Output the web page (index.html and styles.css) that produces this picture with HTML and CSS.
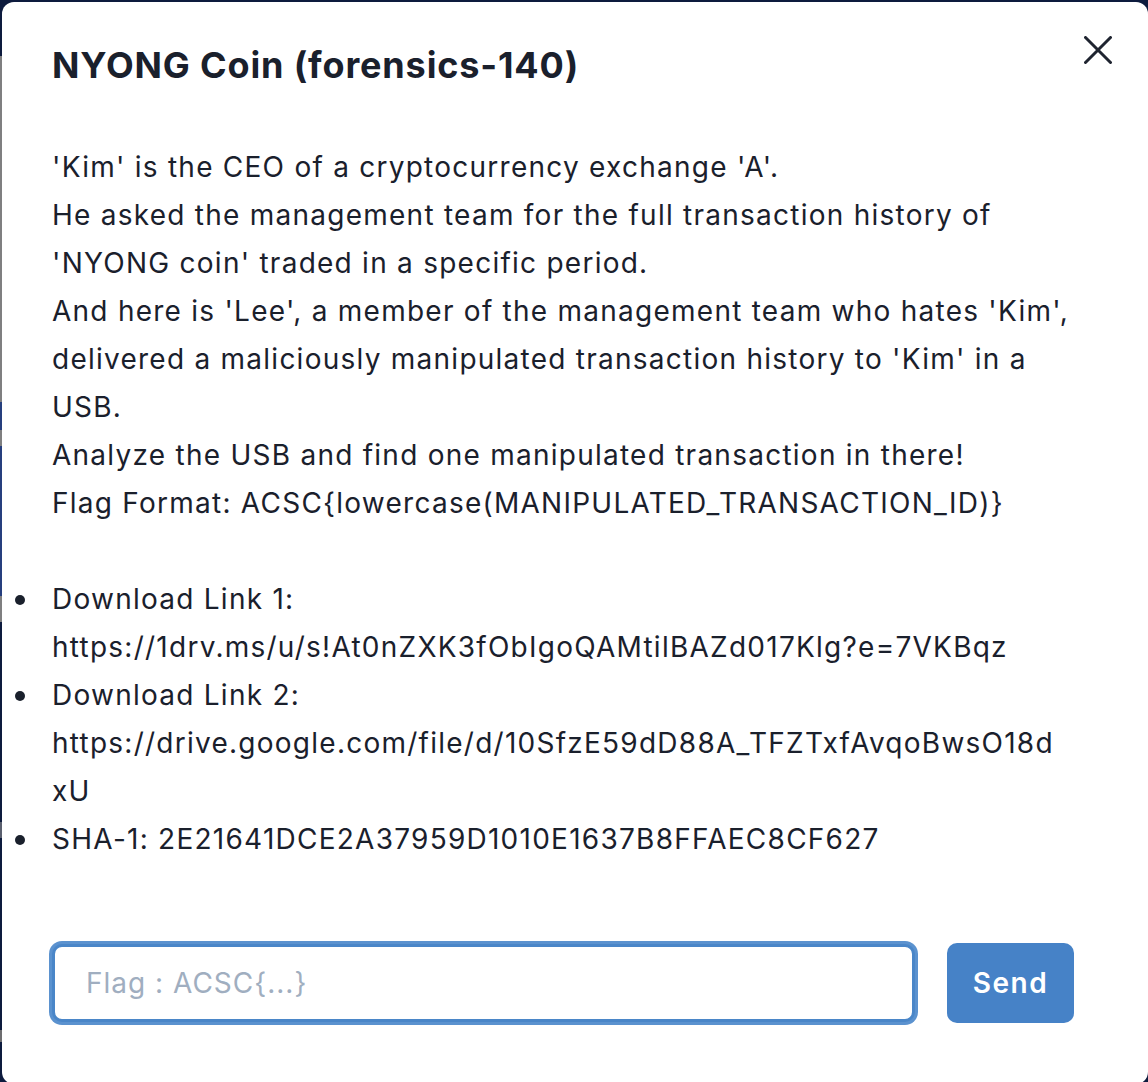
FILE: index.html
```html
<!DOCTYPE html>
<html lang="en">
<head>
<meta charset="utf-8">
<title>NYONG Coin (forensics-140)</title>
<link rel="stylesheet" href="styles.css">
</head>
<body>
<div class="backdrop"></div>
<div class="modal">
  <button class="close" aria-label="Close">
    <svg viewBox="0 0 28 28" width="28" height="28"><path d="M1.5 1.5 L26.5 26.5 M26.5 1.5 L1.5 26.5" stroke="#1f2430" stroke-width="3" stroke-linecap="round" fill="none"/></svg>
  </button>
  <h1 class="title">NYONG Coin (forensics-140)</h1>
  <p class="desc">'Kim' is the CEO of a cryptocurrency exchange 'A'.<br>He asked the management team for the full transaction history of 'NYONG coin' traded in a specific period.<br>And here is 'Lee', a member of the management team who hates 'Kim', delivered a maliciously manipulated transaction history to 'Kim' in a USB.<br>Analyze the USB and find one manipulated transaction in there!<br>Flag Format: ACSC{lowercase(MANIPULATED_TRANSACTION_ID)}</p>
  <ul class="links">
    <li>Download Link 1: https://1drv.ms/u/s!At0nZXK3fObIgoQAMtilBAZd017Klg?e=7VKBqz</li>
    <li>Download Link 2: https://drive.google.com/file/d/10SfzE59dD88A_TFZTxfAvqoBwsO18dxU</li>
    <li>SHA-1: 2E21641DCE2A37959D1010E1637B8FFAEC8CF627</li>
  </ul>
  <form class="flag-form">
    <input class="flag-input" type="text" placeholder="Flag : ACSC{...}">
    <button class="send" type="button">Send</button>
  </form>
</div>
</body>
</html>
```
FILE: styles.css
```css
html, body {
  margin: 0;
  padding: 0;
  width: 1148px;
  height: 1082px;
  overflow: hidden;
}
body {
  background: #0d1b3e;
  font-family: Inter, "Noto Sans", "Liberation Sans", sans-serif;
  color: #1a202c;
  position: relative;
}
.backdrop {
  position: absolute;
  left: 0;
  top: 0;
  width: 2px;
  height: 1082px;
  background: linear-gradient(to bottom,
    #0d1b3e 0, #0d1b3e 56px,
    #7f7f80 56px, #7f7f80 402px,
    #263f7e 402px, #263f7e 430px,
    #7f7f80 430px, #7f7f80 446px,
    #263f7e 446px, #263f7e 596px,
    #7f7f80 596px, #7f7f80 622px,
    #0d1b3e 622px, #0d1b3e 822px,
    #5a5f6e 822px, #5a5f6e 838px,
    #0d1b3e 838px, #0d1b3e 1030px,
    #6d6d70 1030px, #6d6d70 1042px,
    #0d1b3e 1042px);
}
.modal {
  position: absolute;
  left: 2px;
  top: 2px;
  width: 1146px;
  height: 1082px;
  box-sizing: border-box;
  background: #ffffff;
  border-radius: 12px;
  padding: 39px 78px 0 50px;
}
.close {
  position: absolute;
  top: 34px;
  right: 36px;
  width: 28px;
  height: 28px;
  padding: 0;
  border: 0;
  background: none;
  display: flex;
  cursor: pointer;
}
.title {
  margin: 0;
  font-size: 36px;
  line-height: 48px;
  font-weight: 700;
  letter-spacing: 0.85px;
  color: #1a202c;
}
.desc {
  margin: 54px 0 0 0;
  font-size: 28px;
  line-height: 48px;
  letter-spacing: 1.25px;
}
.links {
  margin: 48px 0 0 0;
  padding: 0;
  list-style: none;
  font-size: 28px;
  line-height: 48px;
  letter-spacing: 1.25px;
  overflow-wrap: anywhere;
}
.links li {
  position: relative;
}
.links li::before {
  content: "";
  position: absolute;
  left: -37px;
  top: 20px;
  width: 10px;
  height: 10px;
  border-radius: 50%;
  background: #1a202c;
}
.flag-form {
  margin: 80px 0 0 0;
  display: flex;
  align-items: center;
  gap: 32px;
  height: 80px;
}
.flag-input {
  box-sizing: border-box;
  width: 863px;
  flex: none;
  height: 78px;
  border: 3px solid #4a86c8;
  box-shadow: 0 0 0 3px #5b92cf;
  border-radius: 10px;
  padding: 0 31px;
  font-family: Inter, "Noto Sans", "Liberation Sans", sans-serif;
  font-size: 28px;
  letter-spacing: 1px;
  color: #1a202c;
  outline: none;
  background: #fff;
}
.flag-input::placeholder {
  color: #a0aec0;
}
.send {
  box-sizing: border-box;
  width: 127px;
  flex: none;
  height: 80px;
  border: 0;
  border-radius: 10px;
  background: #4682c7;
  color: #ffffff;
  font-family: Inter, "Noto Sans", "Liberation Sans", sans-serif;
  font-size: 28px;
  font-weight: 600;
  letter-spacing: 1.5px;
  cursor: pointer;
}
```
